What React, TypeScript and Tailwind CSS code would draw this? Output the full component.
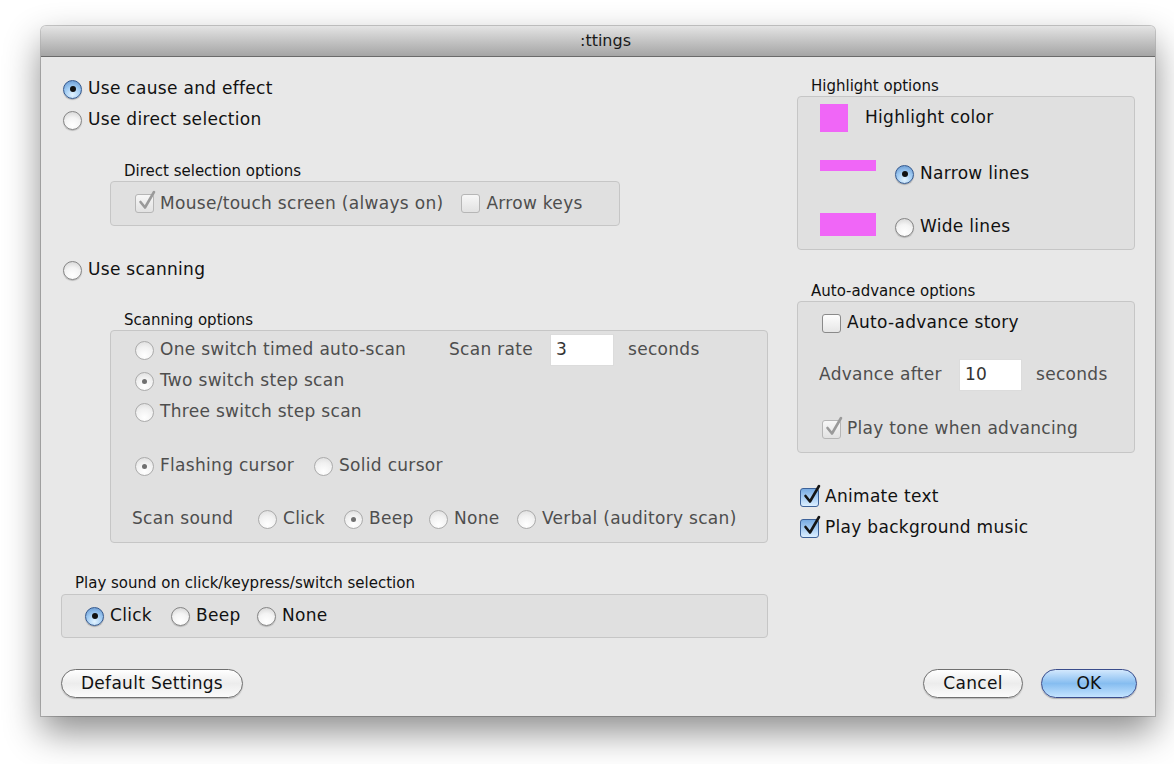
import React from "react";

type ToggleProps = { checked?: boolean; disabled?: boolean };

function Radio({ checked, disabled }: ToggleProps) {
  if (disabled) {
    return (
      <span className="flex h-[19px] w-[19px] shrink-0 items-center justify-center rounded-full border border-[#ababab] bg-[radial-gradient(circle_at_50%_80%,#ffffff_0%,#f1f1f1_55%,#dadada_100%)]">
        {checked && <span className="h-[5px] w-[5px] rounded-full bg-[#707070]" />}
      </span>
    );
  }
  if (checked) {
    return (
      <span className="flex h-[19px] w-[19px] shrink-0 items-center justify-center rounded-full border border-[#34598f] bg-[radial-gradient(circle_at_50%_80%,#e2f3ff_0%,#9fcaf2_50%,#5c8fcb_100%)] shadow-[0_1px_1px_rgba(0,0,0,0.25)]">
        <span className="h-[6px] w-[6px] rounded-full bg-[#111]" />
      </span>
    );
  }
  return (
    <span className="h-[19px] w-[19px] shrink-0 rounded-full border border-[#858585] bg-[radial-gradient(circle_at_50%_80%,#ffffff_0%,#f4f4f4_50%,#cfcfcf_100%)] shadow-[0_1px_1px_rgba(0,0,0,0.2)]" />
  );
}

function Check({ checked, disabled }: ToggleProps) {
  const box = disabled
    ? "border-[#b6b6b6] bg-gradient-to-b from-[#f7f7f7] to-[#e2e2e2]"
    : checked
      ? "border-[#3d6299] bg-gradient-to-b from-[#78abe2] via-[#a8cdf3] to-[#dcefff]"
      : "border-[#8a8a8a] bg-gradient-to-b from-[#fdfdfd] to-[#e6e6e6]";
  return (
    <span className={`relative h-[19px] w-[19px] shrink-0 rounded-[3px] border ${box}`}>
      {checked && (
        <svg className="absolute -top-[5px] left-[1px] h-[21px] w-[20px]" viewBox="0 0 20 21">
          <path
            d="M3.5 12 L8 17.5 L17 2"
            fill="none"
            stroke={disabled ? "#9a9a9a" : "#151515"}
            strokeWidth="2.6"
            strokeLinecap="round"
            strokeLinejoin="round"
          />
        </svg>
      )}
    </span>
  );
}

type OptionProps = ToggleProps & { label: string; className?: string };

function RadioOption({ checked, disabled, label, className = "" }: OptionProps) {
  return (
    <div className={`flex h-[24px] items-center gap-[6px] ${className}`}>
      <Radio checked={checked} disabled={disabled} />
      <span className={disabled ? "whitespace-nowrap text-[#4e4e4e]" : "whitespace-nowrap text-[#111]"}>{label}</span>
    </div>
  );
}

function CheckOption({ checked, disabled, label, className = "" }: OptionProps) {
  return (
    <div className={`flex h-[24px] items-center gap-[6px] ${className}`}>
      <Check checked={checked} disabled={disabled} />
      <span className={disabled ? "whitespace-nowrap text-[#4e4e4e]" : "whitespace-nowrap text-[#111]"}>{label}</span>
    </div>
  );
}

function GroupLabel({ text, className = "" }: { text: string; className?: string }) {
  return (
    <div className={`h-[18px] text-[15px] leading-[18px] tracking-normal text-[#111] ${className}`}>{text}</div>
  );
}

function Field({ value, className = "" }: { value: string; className?: string }) {
  return (
    <div className={`flex h-[32px] items-center border border-[#dcdcdc] bg-white pl-[5px] text-[#333] ${className}`}>
      {value}
    </div>
  );
}

export default function App() {
  return (
    <div className="h-[764px] w-[1174px] overflow-hidden bg-white pl-[41px] pt-[26px] font-['DejaVu_Sans',sans-serif] text-[17px] tracking-[0.3px] text-[#111]">
      <div className="flex h-[690px] w-[1114px] flex-col overflow-hidden rounded-t-[5px] bg-[#e8e8e8] shadow-[0_16px_36px_rgba(0,0,0,0.45),0_0_0_1px_rgba(0,0,0,0.2)]">
        {/* title bar */}
        <div className="flex h-[31px] shrink-0 items-center justify-center border-b border-[#6a6a6a] bg-gradient-to-b from-[#e4e4e4] to-[#a5a5a5] pl-[15px] text-[16px] tracking-normal text-[#1a1a1a]">
          :ttings
        </div>

        <div className="flex flex-1 flex-col px-[20px]">
          <div className="flex">
            {/* left column */}
            <div className="flex w-[707px] flex-col">
              <RadioOption checked label="Use cause and effect" className="ml-[2px] mt-[20px]" />
              <RadioOption label="Use direct selection" className="ml-[2px] mt-[7px]" />

              <GroupLabel text="Direct selection options" className="ml-[63px] mt-[30px]" />
              <div className="ml-[49px] mt-[1px] flex h-[45px] w-[510px] items-center rounded-[4px] border border-[#c6c6c6] bg-[#e0e0e0] pl-[24px]">
                <CheckOption checked disabled label="Mouse/touch screen (always on)" />
                <CheckOption disabled label="Arrow keys" className="ml-[18px]" />
              </div>

              <RadioOption label="Use scanning" className="ml-[2px] mt-[32px]" />

              <GroupLabel text="Scanning options" className="ml-[63px] mt-[29px]" />
              <div className="ml-[49px] mt-[1px] flex h-[213px] w-[658px] flex-col rounded-[4px] border border-[#c6c6c6] bg-[#e0e0e0] pl-[24px] pt-[7px]">
                <div className="flex h-[24px] items-center">
                  <RadioOption disabled label="One switch timed auto-scan" className="w-[314px]" />
                  <span className="text-[#4e4e4e]">Scan rate</span>
                  <Field value="3" className="ml-[17px] w-[64px]" />
                  <span className="ml-[14px] text-[#4e4e4e]">seconds</span>
                </div>
                <RadioOption disabled checked label="Two switch step scan" className="mt-[7px]" />
                <RadioOption disabled label="Three switch step scan" className="mt-[7px]" />
                <div className="mt-[30px] flex">
                  <RadioOption disabled checked label="Flashing cursor" className="w-[179px]" />
                  <RadioOption disabled label="Solid cursor" />
                </div>
                <div className="-ml-[3px] mt-[29px] flex h-[24px] items-center">
                  <span className="w-[126px] text-[#4e4e4e]">Scan sound</span>
                  <RadioOption disabled label="Click" className="w-[86px]" />
                  <RadioOption disabled checked label="Beep" className="w-[85px]" />
                  <RadioOption disabled label="None" className="w-[88px]" />
                  <RadioOption disabled label="Verbal (auditory scan)" />
                </div>
              </div>

              <GroupLabel text="Play sound on click/keypress/switch selection" className="ml-[14px] mt-[31px]" />
              <div className="mt-[2px] flex h-[44px] w-[707px] items-center rounded-[4px] border border-[#c6c6c6] bg-[#e0e0e0] pl-[23px]">
                <RadioOption checked label="Click" className="w-[86px]" />
                <RadioOption label="Beep" className="w-[86px]" />
                <RadioOption label="None" />
              </div>
            </div>

            {/* right column */}
            <div className="ml-[29px] flex w-[338px] flex-col">
              <GroupLabel text="Highlight options" className="ml-[14px] mt-[20px]" />
              <div className="mt-[1px] flex h-[154px] flex-col rounded-[4px] border border-[#c6c6c6] bg-[#e0e0e0] pl-[22px] pt-[7px]">
                <div className="flex h-[28px] items-center">
                  <span className="h-[28px] w-[28px] bg-[#f066f7]" />
                  <span className="ml-[17px]">Highlight color</span>
                </div>
                <div className="mt-[28px] flex h-[28px] items-center">
                  <span className="h-[11px] w-[56px] self-start bg-[#f066f7]" />
                  <RadioOption checked label="Narrow lines" className="ml-[19px]" />
                </div>
                <div className="mt-[25px] flex h-[28px] items-center">
                  <span className="h-[23px] w-[56px] self-start bg-[#f066f7]" />
                  <RadioOption label="Wide lines" className="ml-[19px]" />
                </div>
              </div>

              <GroupLabel text="Auto-advance options" className="ml-[14px] mt-[32px]" />
              <div className="mt-[1px] flex h-[152px] flex-col rounded-[4px] border border-[#c6c6c6] bg-[#e0e0e0] pl-[24px] pt-[9px]">
                <CheckOption label="Auto-advance story" />
                <div className="-ml-[3px] mt-[24px] flex h-[32px] items-center">
                  <span className="w-[140px] text-[#4e4e4e]">Advance after</span>
                  <Field value="10" className="w-[63px]" />
                  <span className="ml-[14px] text-[#4e4e4e]">seconds</span>
                </div>
                <CheckOption checked disabled label="Play tone when advancing" className="mt-[26px]" />
              </div>

              <CheckOption checked label="Animate text" className="ml-[3px] mt-[32px]" />
              <CheckOption checked label="Play background music" className="ml-[3px] mt-[7px]" />
            </div>
          </div>

          {/* dialog buttons */}
          <div className="-mr-[2px] mt-[31px] flex items-center">
            <button className="flex h-[29px] w-[182px] items-center justify-center rounded-full border border-[#6f6f6f] bg-gradient-to-b from-[#ffffff] via-[#ececec] to-[#fbfbfb] text-[17px] text-[#111] shadow-[0_1px_1px_rgba(0,0,0,0.2)]">
              Default Settings
            </button>
            <div className="ml-auto flex gap-[18px]">
              <button className="flex h-[29px] w-[100px] items-center justify-center rounded-full border border-[#6f6f6f] bg-gradient-to-b from-[#ffffff] via-[#ececec] to-[#fbfbfb] text-[17px] text-[#111] shadow-[0_1px_1px_rgba(0,0,0,0.2)]">
                Cancel
              </button>
              <button className="flex h-[29px] w-[96px] items-center justify-center rounded-full border border-[#3a4d8c] bg-gradient-to-b from-[#d2e8fd] via-[#86bdf0] to-[#c4e4ff] text-[17px] text-[#111] shadow-[0_1px_1px_rgba(0,0,0,0.25)]">
                OK
              </button>
            </div>
          </div>
        </div>
      </div>
    </div>
  );
}
